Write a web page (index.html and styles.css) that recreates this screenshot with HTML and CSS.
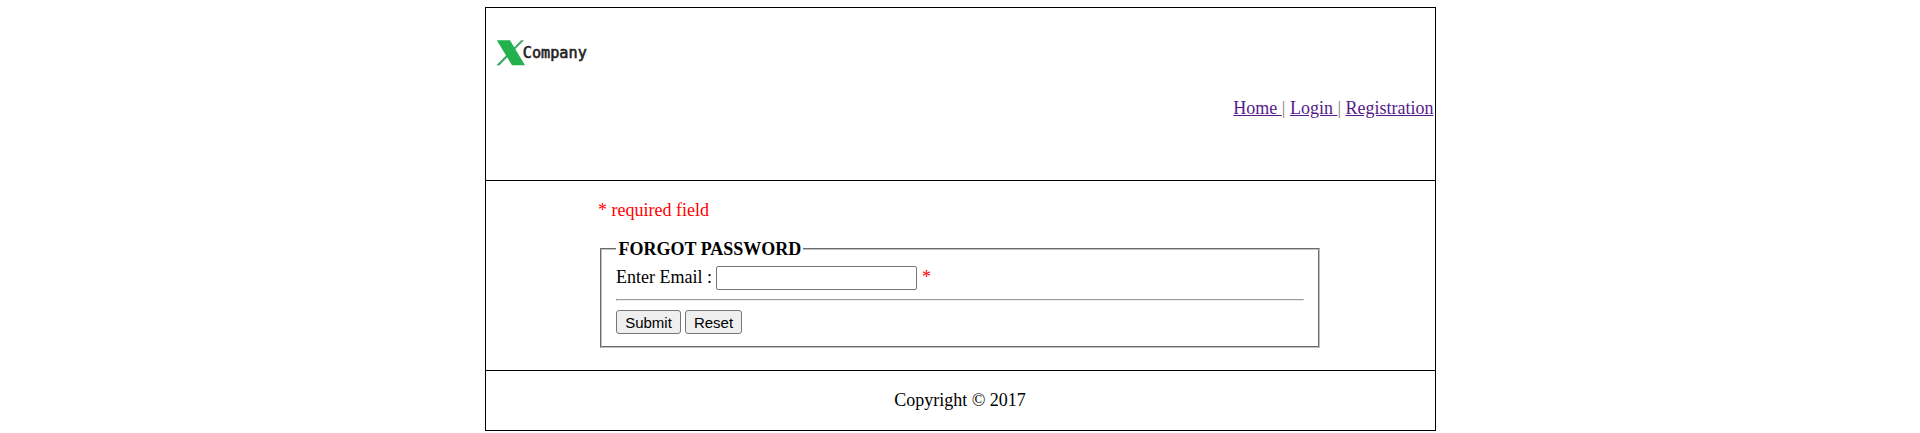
FILE: index.html
```html
<!DOCTYPE html>
<html lang="en">
<head>
<meta charset="utf-8">
<title>Forgot Password</title>
<link rel="stylesheet" href="styles.css">
</head>
<body>
<div class="page">
  <header class="header">
    <svg class="logo" width="100" height="34" viewBox="0 0 100 34" role="img" aria-label="XCompany">
      <path d="M33.2 4.3h2.8L11.5 29.2H8.3z" fill="#3fa562"/>
      <path d="M8.8 4.3H22L37 29.2H24z" fill="#22b14c"/>
      <text class="logo-text" x="34.8" y="21.5" textLength="64" lengthAdjust="spacingAndGlyphs">Company</text>
    </svg>
    <nav class="nav"><a href="#">Home </a>| <a href="#">Login </a>| <a href="#">Registration</a></nav>
  </header>
  <main class="main">
    <p class="required">* required field</p>
    <form>
      <fieldset class="box">
        <legend class="legend">FORGOT PASSWORD</legend>
        <div class="row"><label class="label" for="email">Enter Email :</label><input class="input" id="email" type="text"><span class="star">*</span></div>
        <hr class="rule">
        <div class="row"><button class="button submit" type="submit">Submit</button><button class="button reset" type="reset">Reset</button></div>
      </fieldset>
    </form>
  </main>
  <footer class="footer">Copyright © 2017</footer>
</div>
</body>
</html>
```
FILE: styles.css
```css
* { box-sizing: border-box; }
body {
  margin: 7px 0 0;
  background: #fff;
  color: #000;
  font: 18px/20px "Liberation Serif", "Times New Roman", serif;
}
.page {
  width: 951px;
  margin: 0 auto 0 485px;
  border: 1px solid #000;
}
.header {
  height: 173px;
  padding: 28px 1.5px 0 2px;
  border-bottom: 1px solid #000;
}
.logo { display: block; }
.logo-text {
  font: 15.5px "DejaVu Sans Mono", monospace;
  fill: #222;
  stroke: #222;
  stroke-width: 0.6px;
}
.nav {
  margin-top: 28px;
  text-align: right;
  color: #808080;
}
.nav a { color: #551a8b; }
.main {
  height: 190px;
  padding: 19px 115px 0 114px;
  border-bottom: 1px solid #000;
}
.required {
  margin: 0 0 19px -2px;
  color: #f00;
}
.box {
  width: 720px;
  height: 109px;
  margin: 0;
  padding: 7px 14px 0;
  border: 2px groove #c0c0c0;
}
.legend {
  padding: 0 2px 0 2.5px;
  font-weight: bold;
}
.row {
  display: flex;
  align-items: center;
  gap: 4px;
}
.label,
.star { padding-bottom: 2px; }
.input {
  width: 201px;
  height: 24px;
  border: 1px solid #767676;
  border-radius: 2px;
}
.star {
  margin-left: 1px;
  color: #f00;
}
.rule {
  height: 2px;
  margin: 9px 0;
  border: 1px inset #eee;
}
.button {
  height: 24px;
  padding: 0;
  border: 1px solid #767676;
  border-radius: 3px;
  background: #efefef;
  color: #000;
  font: 15px "Liberation Sans", Arial, sans-serif;
}
.submit { width: 65px; }
.reset { width: 57px; }
.footer {
  height: 59px;
  padding: 19px 1px 0 0;
  text-align: center;
}
```
